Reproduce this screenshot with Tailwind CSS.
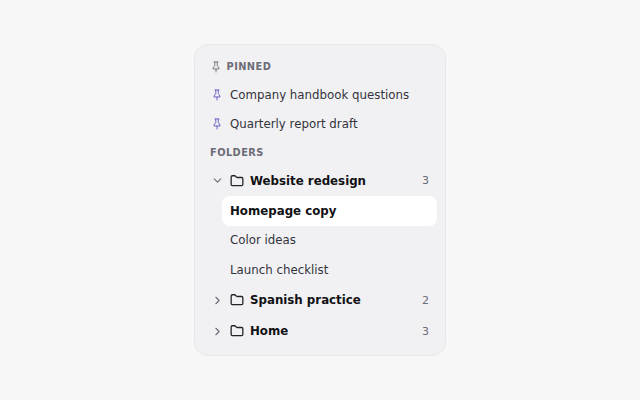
<!DOCTYPE html>
<html lang="en">
  <head>
    <meta charset="UTF-8" />
    <script src="https://cdn.jsdelivr.net/npm/@tailwindcss/browser@4"></script>
    <title>Sidebar</title>
  </head>
  <body>
    <div class="w-[640px] h-[400px] bg-[#f7f7f8] flex items-center justify-center font-['DejaVu_Sans',sans-serif]">
      <div class="w-[252px] h-[312px] rounded-[14px] border border-[#e8e8ec] bg-[#f1f1f4] px-2 pt-3 pb-2">
        <div class="h-[19px] flex items-center gap-[5px] pl-[6.5px] text-[9.8px] font-bold tracking-[0.45px] text-[#6b6b76]">
          <svg class="w-[12px] h-[12px]" viewBox="0 0 24 24" fill="none" stroke="currentColor" stroke-width="1.8" stroke-linecap="round" stroke-linejoin="round"><path d="M12 16v6" /><path d="M8 2h8" /><path d="M9.5 2v7l-3.5 5v2h12v-2l-3.5-5V2" /></svg>
          <span class="pt-[2px]">PINNED</span>
        </div>
        <div class="mt-[4px] flex flex-col">
          <div class="h-[29.5px] flex items-center gap-[7px] pl-[8px] text-[11.8px] text-[#33333b]">
            <svg class="w-[12px] h-[12px] text-[#5f57c0]" viewBox="0 0 24 24" fill="none" stroke="currentColor" stroke-width="1.8" stroke-linecap="round" stroke-linejoin="round"><path d="M12 16v6" /><path d="M8 2h8" /><path d="M9.5 2v7l-3.5 5v2h12v-2l-3.5-5V2" /></svg>
            <span class="pt-[2px]">Company handbook questions</span>
          </div>
          <div class="h-[29.5px] flex items-center gap-[7px] pl-[8px] text-[11.8px] text-[#33333b]">
            <svg class="w-[12px] h-[12px] text-[#5f57c0]" viewBox="0 0 24 24" fill="none" stroke="currentColor" stroke-width="1.8" stroke-linecap="round" stroke-linejoin="round"><path d="M12 16v6" /><path d="M8 2h8" /><path d="M9.5 2v7l-3.5 5v2h12v-2l-3.5-5V2" /></svg>
            <span class="pt-[2px]">Quarterly report draft</span>
          </div>
        </div>
        <div class="h-[19px] mt-[4px] flex items-center pl-[7px] text-[9.8px] font-bold tracking-[0.45px] text-[#6b6b76]"><span class="pt-[2px]">FOLDERS</span></div>
        <div class="mt-[3px] flex flex-col">
          <div class="h-[31px] flex items-center pl-[7.5px] pr-[8px] text-[11.8px] font-bold text-[#111114]">
            <svg class="w-[13px] h-[13px] text-[#6b6b76] mr-[6.5px]" viewBox="0 0 24 24" fill="none" stroke="currentColor" stroke-width="2" stroke-linecap="round" stroke-linejoin="round"><path d="m6 9 6 6 6-6" /></svg>
            <svg class="w-[14px] h-[14px] mr-[6px] text-[#222228]" viewBox="0 0 24 24" fill="none" stroke="currentColor" stroke-width="2.2" stroke-linecap="round" stroke-linejoin="round"><path d="M20 20a2 2 0 0 0 2-2V8a2 2 0 0 0-2-2h-7.9a2 2 0 0 1-1.69-.9L9.6 3.9A2 2 0 0 0 7.93 3H4a2 2 0 0 0-2 2v13a2 2 0 0 0 2 2Z" /></svg>
            <span class="flex-1 pt-[2px]">Website redesign</span>
            <span class="text-[11px] font-normal text-[#6b6b76] pt-[2px]">3</span>
          </div>
          <div class="ml-[19px] flex flex-col">
            <div class="h-[29.5px] flex items-center pl-2 rounded-lg bg-white text-[11.8px] font-bold text-[#111114]"><span class="pt-[2px]">Homepage copy</span></div>
            <div class="h-[29.5px] flex items-center pl-2 text-[11.8px] text-[#33333b]"><span class="pt-[2px]">Color ideas</span></div>
            <div class="h-[29.5px] flex items-center pl-2 text-[11.8px] text-[#33333b]"><span class="pt-[2px]">Launch checklist</span></div>
          </div>
          <div class="h-[31px] flex items-center pl-[7.5px] pr-[8px] text-[11.8px] font-bold text-[#111114]">
            <svg class="w-[13px] h-[13px] text-[#6b6b76] mr-[6.5px]" viewBox="0 0 24 24" fill="none" stroke="currentColor" stroke-width="2" stroke-linecap="round" stroke-linejoin="round"><path d="m9 18 6-6-6-6" /></svg>
            <svg class="w-[14px] h-[14px] mr-[6px] text-[#222228]" viewBox="0 0 24 24" fill="none" stroke="currentColor" stroke-width="2.2" stroke-linecap="round" stroke-linejoin="round"><path d="M20 20a2 2 0 0 0 2-2V8a2 2 0 0 0-2-2h-7.9a2 2 0 0 1-1.69-.9L9.6 3.9A2 2 0 0 0 7.93 3H4a2 2 0 0 0-2 2v13a2 2 0 0 0 2 2Z" /></svg>
            <span class="flex-1 pt-[2px]">Spanish practice</span>
            <span class="text-[11px] font-normal text-[#6b6b76] pt-[2px]">2</span>
          </div>
          <div class="h-[31px] flex items-center pl-[7.5px] pr-[8px] text-[11.8px] font-bold text-[#111114]">
            <svg class="w-[13px] h-[13px] text-[#6b6b76] mr-[6.5px]" viewBox="0 0 24 24" fill="none" stroke="currentColor" stroke-width="2" stroke-linecap="round" stroke-linejoin="round"><path d="m9 18 6-6-6-6" /></svg>
            <svg class="w-[14px] h-[14px] mr-[6px] text-[#222228]" viewBox="0 0 24 24" fill="none" stroke="currentColor" stroke-width="2.2" stroke-linecap="round" stroke-linejoin="round"><path d="M20 20a2 2 0 0 0 2-2V8a2 2 0 0 0-2-2h-7.9a2 2 0 0 1-1.69-.9L9.6 3.9A2 2 0 0 0 7.93 3H4a2 2 0 0 0-2 2v13a2 2 0 0 0 2 2Z" /></svg>
            <span class="flex-1 pt-[2px]">Home</span>
            <span class="text-[11px] font-normal text-[#6b6b76] pt-[2px]">3</span>
          </div>
        </div>
      </div>
    </div>
  </body>
</html>
